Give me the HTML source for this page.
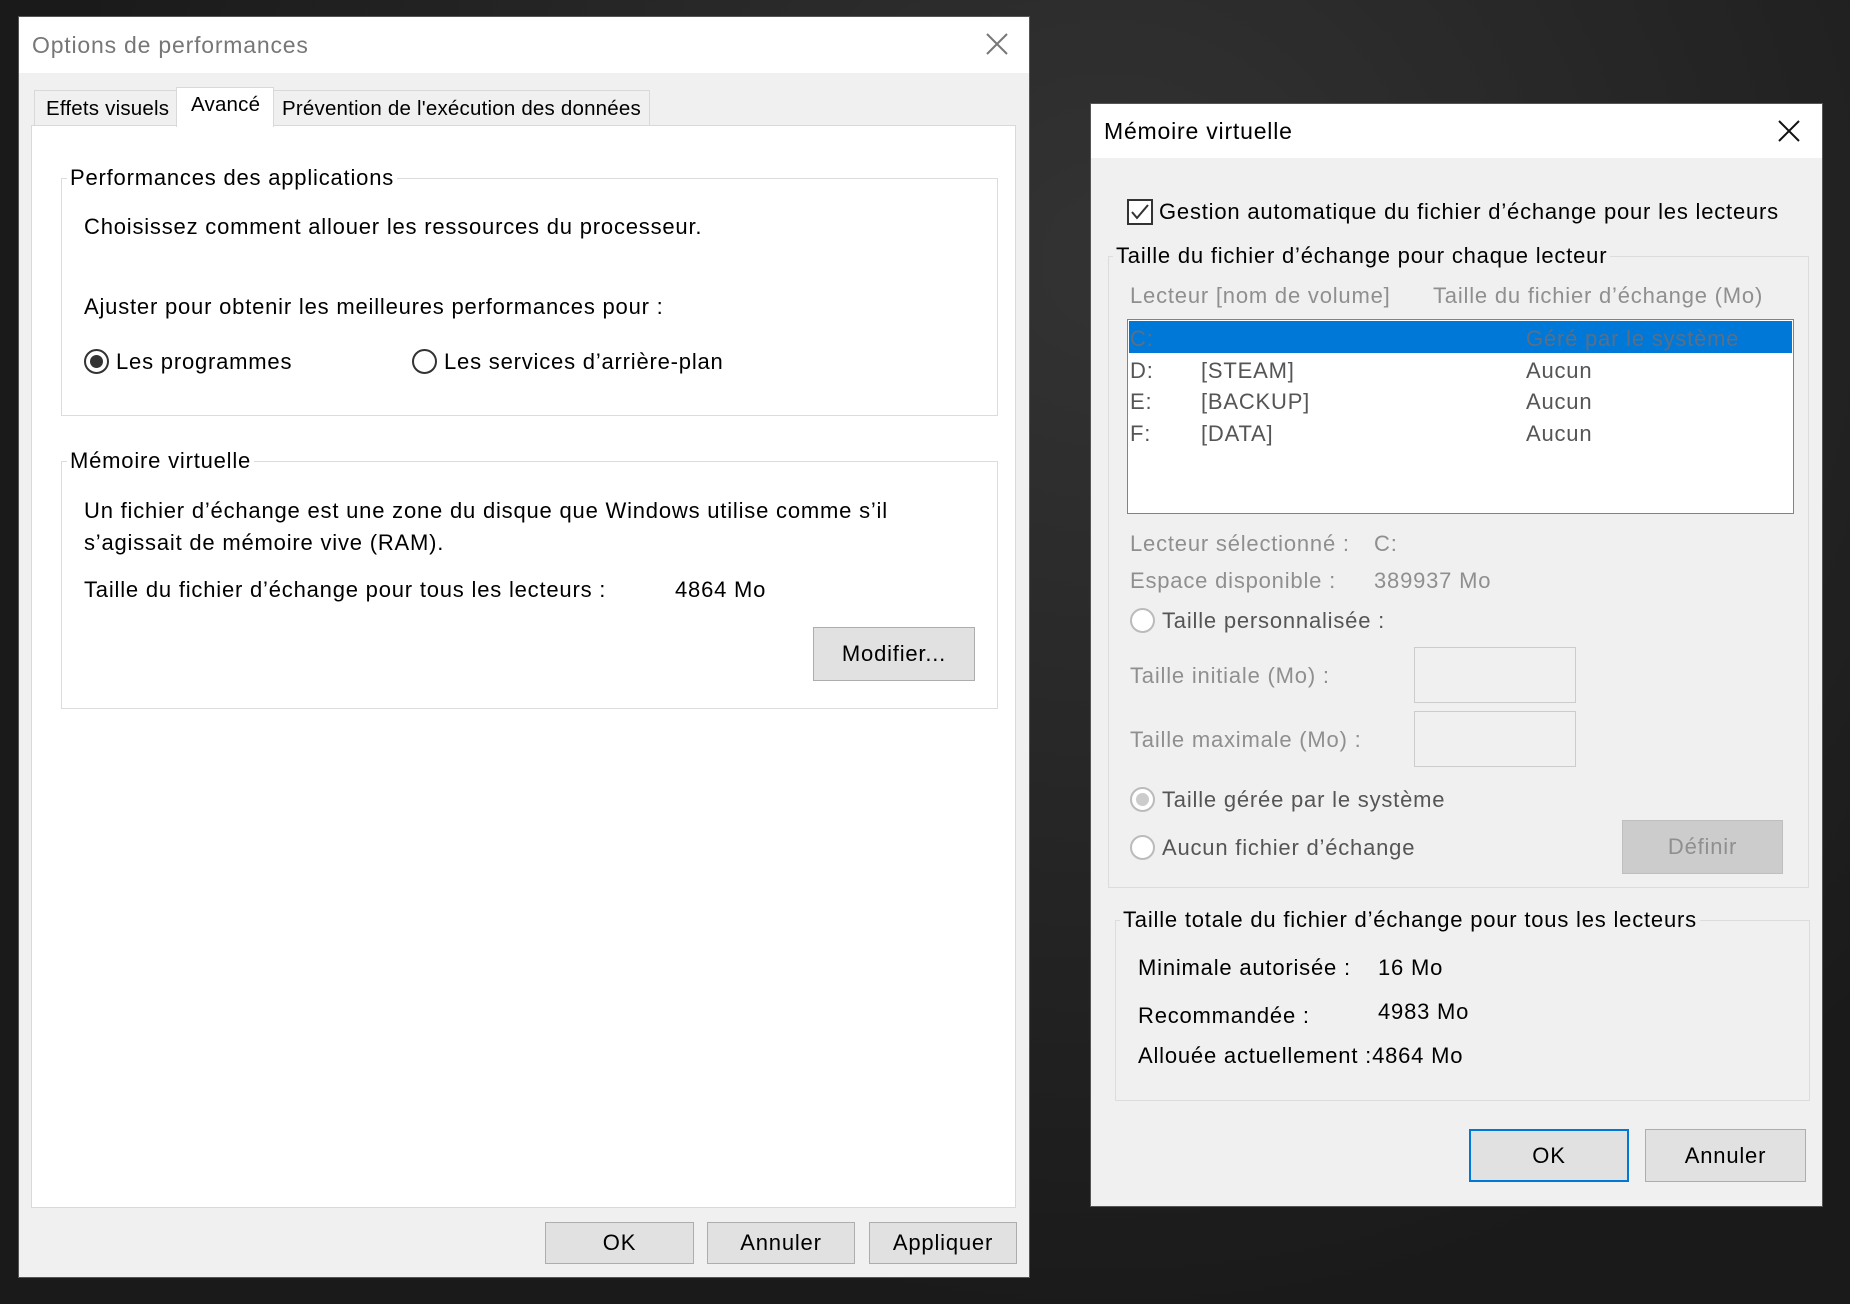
<!DOCTYPE html>
<html><head><meta charset="utf-8"><style>
*{margin:0;padding:0;box-sizing:border-box}
body{width:1850px;height:1304px;overflow:hidden;background:#1b1b1b;font-family:"Liberation Sans",sans-serif;font-size:22px;letter-spacing:0.8px;color:#000;position:relative}
.a{position:absolute}
.t{position:absolute;line-height:26px;white-space:nowrap}
.g{color:#8f8f8f}
.box{position:absolute;border:1px solid #dcdcdc}
.leg{position:absolute;line-height:26px;padding:0 3px;white-space:nowrap}
.btn{position:absolute;background:#e1e1e1;border:1px solid #adadad;text-align:center;line-height:40px}
.rad{position:absolute;width:25px;height:25px;border:2px solid #333;border-radius:50%;background:#fff}
.tab{font-size:20.5px;letter-spacing:0.2px}
</style></head><body>
<div class="a" style="left:0;top:0;width:1850px;height:1304px;background:radial-gradient(circle at 60% 20%,#333,#1a1a1a 70%)"></div>

<!-- LEFT DIALOG -->
<div class="a" style="left:18px;top:16px;width:1012px;height:1262px;background:#f0f0f0;border:1px solid #555"></div>
<div class="a" style="left:19px;top:17px;width:1010px;height:56px;background:#fff"></div>
<div class="t" style="left:32px;top:32px;color:#777;font-size:23px">Options de performances</div>
<svg class="a" style="left:986px;top:33px" width="22" height="22"><path d="M1 1L21 21M21 1L1 21" stroke="#777" stroke-width="2"/></svg>

<div class="a" style="left:31px;top:125px;width:985px;height:1083px;background:#fff;border:1px solid #d9d9d9"></div>
<div class="a" style="left:34px;top:90px;width:143px;height:36px;background:#f0f0f0;border:1px solid #d9d9d9"></div>
<div class="t tab" style="left:46px;top:96px">Effets visuels</div>
<div class="a" style="left:176px;top:87px;width:98px;height:40px;background:#fff;border:1px solid #d9d9d9;border-bottom:none"></div>
<div class="t tab" style="left:191px;top:92px">Avancé</div>
<div class="a" style="left:273px;top:90px;width:377px;height:36px;background:#f0f0f0;border:1px solid #d9d9d9"></div>
<div class="t tab" style="left:282px;top:96px">Prévention de l'exécution des données</div>

<div class="box" style="left:61px;top:178px;width:937px;height:238px"></div>
<div class="leg" style="left:67px;top:165px;background:#fff">Performances des applications</div>
<div class="t" style="left:84px;top:214px">Choisissez comment allouer les ressources du processeur.</div>
<div class="t" style="left:84px;top:294px">Ajuster pour obtenir les meilleures performances pour :</div>
<div class="rad" style="left:84px;top:349px"><div class="a" style="left:4px;top:4px;width:13px;height:13px;border-radius:50%;background:#333"></div></div>
<div class="t" style="left:116px;top:349px">Les programmes</div>
<div class="rad" style="left:412px;top:349px"></div>
<div class="t" style="left:444px;top:349px">Les services d’arrière-plan</div>

<div class="box" style="left:61px;top:461px;width:937px;height:248px"></div>
<div class="leg" style="left:67px;top:448px;background:#fff">Mémoire virtuelle</div>
<div class="t" style="left:84px;top:498px">Un fichier d’échange est une zone du disque que Windows utilise comme s’il</div>
<div class="t" style="left:84px;top:530px">s’agissait de mémoire vive (RAM).</div>
<div class="t" style="left:84px;top:577px">Taille du fichier d’échange pour tous les lecteurs :</div>
<div class="t" style="left:675px;top:577px">4864 Mo</div>
<div class="btn" style="left:813px;top:627px;width:162px;height:54px;line-height:52px">Modifier...</div>

<div class="btn" style="left:545px;top:1222px;width:149px;height:42px">OK</div>
<div class="btn" style="left:707px;top:1222px;width:148px;height:42px">Annuler</div>
<div class="btn" style="left:869px;top:1222px;width:148px;height:42px">Appliquer</div>

<!-- RIGHT DIALOG -->
<div class="a" style="left:1090px;top:103px;width:733px;height:1104px;background:#f0f0f0;border:1px solid #555"></div>
<div class="a" style="left:1091px;top:104px;width:731px;height:54px;background:#fff"></div>
<div class="t" style="left:1104px;top:118px;font-size:23px">Mémoire virtuelle</div>
<svg class="a" style="left:1778px;top:120px" width="22" height="22"><path d="M1 1L21 21M21 1L1 21" stroke="#111" stroke-width="2"/></svg>

<div class="a" style="left:1127px;top:199px;width:26px;height:26px;border:2px solid #333;background:#fff"></div>
<svg class="a" style="left:1130px;top:202px" width="20" height="20"><path d="M2 10L7 16L18 3" stroke="#333" stroke-width="2" fill="none"/></svg>
<div class="t" style="left:1159px;top:199px">Gestion automatique du fichier d’échange pour les lecteurs</div>

<div class="box" style="left:1108px;top:256px;width:701px;height:632px"></div>
<div class="leg" style="left:1113px;top:243px;background:#f0f0f0">Taille du fichier d’échange pour chaque lecteur</div>
<div class="t g" style="left:1130px;top:283px">Lecteur [nom de volume]</div>
<div class="t g" style="left:1433px;top:283px">Taille du fichier d’échange (Mo)</div>
<div class="a" style="left:1127px;top:319px;width:667px;height:195px;background:#fff;border:1px solid #828282"></div>
<div class="a" style="left:1129px;top:321px;width:663px;height:32px;background:#0078d7"></div>
<div class="t" style="left:1130px;top:326px;color:#5a6f86">C:</div>
<div class="t" style="left:1526px;top:326px;color:#5a6f86">Géré par le système</div>
<div class="t" style="left:1130px;top:358px;color:#555">D:</div><div class="t" style="left:1201px;top:358px;color:#555">[STEAM]</div><div class="t" style="left:1526px;top:358px;color:#555">Aucun</div>
<div class="t" style="left:1130px;top:389px;color:#555">E:</div><div class="t" style="left:1201px;top:389px;color:#555">[BACKUP]</div><div class="t" style="left:1526px;top:389px;color:#555">Aucun</div>
<div class="t" style="left:1130px;top:421px;color:#555">F:</div><div class="t" style="left:1201px;top:421px;color:#555">[DATA]</div><div class="t" style="left:1526px;top:421px;color:#555">Aucun</div>

<div class="t g" style="left:1130px;top:531px">Lecteur sélectionné :</div><div class="t g" style="left:1374px;top:531px">C:</div>
<div class="t g" style="left:1130px;top:568px">Espace disponible :</div><div class="t g" style="left:1374px;top:568px">389937 Mo</div>
<div class="rad" style="left:1130px;top:608px;border-color:#bbb"></div>
<div class="t" style="left:1162px;top:608px;color:#555">Taille personnalisée :</div>
<div class="t g" style="left:1130px;top:663px">Taille initiale (Mo) :</div>
<div class="a" style="left:1414px;top:647px;width:162px;height:56px;border:1px solid #ccc"></div>
<div class="t g" style="left:1130px;top:727px">Taille maximale (Mo) :</div>
<div class="a" style="left:1414px;top:711px;width:162px;height:56px;border:1px solid #ccc"></div>
<div class="rad" style="left:1130px;top:787px;border-color:#bbb"><div class="a" style="left:4px;top:4px;width:13px;height:13px;border-radius:50%;background:#ccc"></div></div>
<div class="t" style="left:1162px;top:787px;color:#555">Taille gérée par le système</div>
<div class="rad" style="left:1130px;top:835px;border-color:#bbb"></div>
<div class="t" style="left:1162px;top:835px;color:#555">Aucun fichier d’échange</div>
<div class="btn g" style="left:1622px;top:820px;width:161px;height:54px;line-height:52px;background:#ccc;border-color:#bfbfbf">Définir</div>

<div class="box" style="left:1115px;top:920px;width:695px;height:181px"></div>
<div class="leg" style="left:1120px;top:907px;background:#f0f0f0">Taille totale du fichier d’échange pour tous les lecteurs</div>
<div class="t" style="left:1138px;top:955px">Minimale autorisée :</div><div class="t" style="left:1378px;top:955px">16 Mo</div>
<div class="t" style="left:1138px;top:1003px">Recommandée :</div><div class="t" style="left:1378px;top:999px">4983 Mo</div>
<div class="t" style="left:1138px;top:1043px">Allouée actuellement :4864 Mo</div>

<div class="btn" style="left:1469px;top:1129px;width:160px;height:53px;line-height:49px;border:2px solid #0078d7">OK</div>
<div class="btn" style="left:1645px;top:1129px;width:161px;height:53px;line-height:51px">Annuler</div>
</body></html>
